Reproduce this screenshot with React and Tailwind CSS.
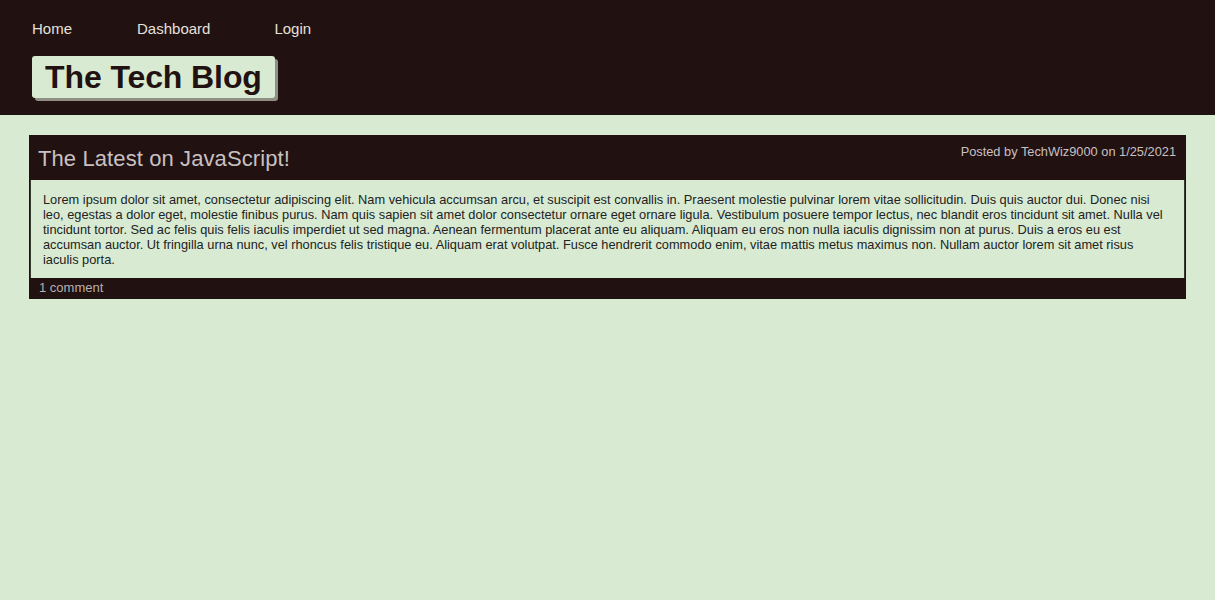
const post = {
  title: 'The Latest on JavaScript!',
  author: 'TechWiz9000',
  date: '1/25/2021',
  body: 'Lorem ipsum dolor sit amet, consectetur adipiscing elit. Nam vehicula accumsan arcu, et suscipit est convallis in. Praesent molestie pulvinar lorem vitae sollicitudin. Duis quis auctor dui. Donec nisi leo, egestas a dolor eget, molestie finibus purus. Nam quis sapien sit amet dolor consectetur ornare eget ornare ligula. Vestibulum posuere tempor lectus, nec blandit eros tincidunt sit amet. Nulla vel tincidunt tortor. Sed ac felis quis felis iaculis imperdiet ut sed magna. Aenean fermentum placerat ante eu aliquam. Aliquam eu eros non nulla iaculis dignissim non at purus. Duis a eros eu est accumsan auctor. Ut fringilla urna nunc, vel rhoncus felis tristique eu. Aliquam erat volutpat. Fusce hendrerit commodo enim, vitae mattis metus maximus non. Nullam auctor lorem sit amet risus iaculis porta.',
  comments: 1,
};

const Header = () => (
  <header className="bg-[#211111] h-[115px] px-8 pt-[19px]">
    <nav className="flex text-[15px] text-[#e6e0dc] leading-5">
      <a href="#" className="mr-[65px]">Home</a>
      <a href="#" className="mr-[64px]">Dashboard</a>
      <a href="#">Login</a>
    </nav>
    <div className="mt-[17px] inline-block bg-[#d8ead2] rounded-[3px] shadow-[3px_3px_0_#8f8f85] px-[13px] h-[42px]">
      <h1 className="text-[32px] font-bold text-[#211111] leading-[42px] tracking-[-0.1px]">The Tech Blog</h1>
    </div>
  </header>
);

const PostCard = ({ post }) => (
  <article className="bg-[#d8ead2] border border-[#211111]">
    <div className="bg-[#211111] h-[44px] flex justify-between pl-[8px] pr-[9px]">
      <h2 className="text-[22px] text-[#c9c0c2] leading-[46px] tracking-[0.1px]">{post.title}</h2>
      <p className="text-[12.8px] text-[#c9c0c2] pt-[8px] leading-4">
        Posted by {post.author} on {post.date}
      </p>
    </div>
    <div className="border-x border-[#3a3a33] pl-[12px] pr-[16px] pt-[12px] pb-[11px] text-[12.8px] leading-[15px] text-[#222]">
      {post.body}
    </div>
    <div className="bg-[#211111] h-[20px] px-[9px] text-[13px] leading-[20px] text-[#b8b0ae]">
      {post.comments} comment{post.comments === 1 ? '' : 's'}
    </div>
  </article>
);

export default function App() {
  return (
    <div className="min-h-[600px] bg-[#d8ead2] font-['Liberation_Sans',Arial,sans-serif]">
      <Header />
      <main className="px-[29px] pt-[20px]">
        <PostCard post={post} />
      </main>
    </div>
  );
}
